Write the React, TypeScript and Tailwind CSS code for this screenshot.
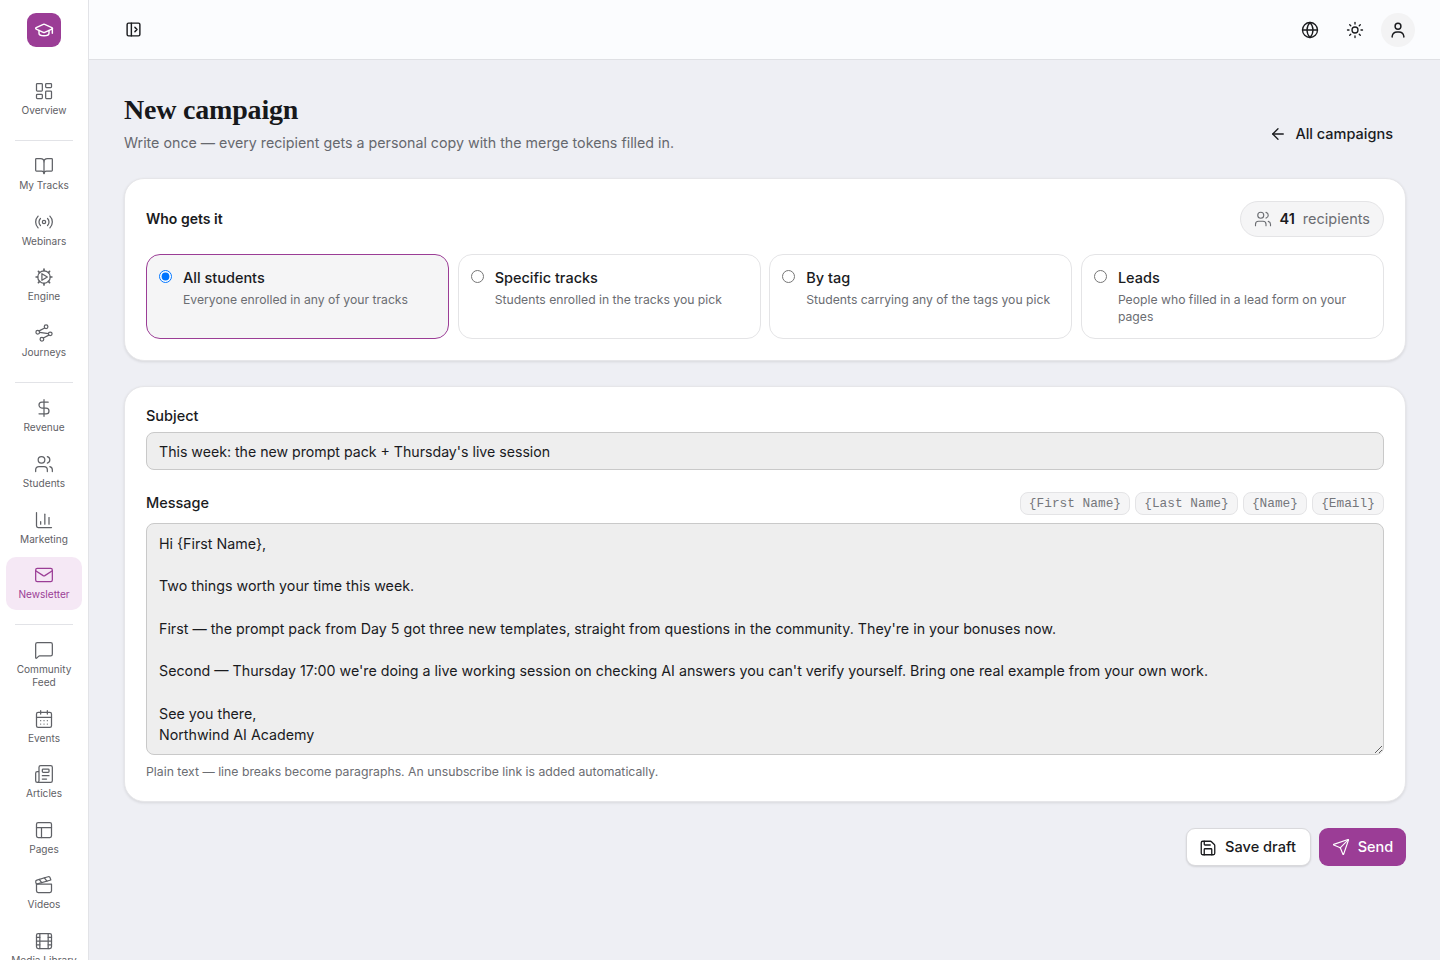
import React from "react";
import {
  GraduationCap, LayoutDashboard, BookOpen, Radio, DollarSign, Users, ChartColumn, Mail,
  MessageSquare, CalendarDays, Newspaper, PanelsTopLeft, Clapperboard, Film, PanelLeftOpen, Globe, Sun,
  ArrowLeft, Save, Send,
} from "lucide-react";

function EngineIcon({ className }: { className?: string }) {
  return (
    <svg viewBox="0 0 24 24" fill="none" stroke="currentColor" strokeWidth={1.5} strokeLinecap="round" strokeLinejoin="round" className={className}>
      <circle cx="12" cy="12" r="7.500" />
      <path strokeWidth={2} d="M12 2.500v2M12 19.500v2M21.500 12h-2M4.500 12h-2M18.700 5.300l-1.400 1.400M6.700 17.300l-1.400 1.400M18.700 18.700l-1.400-1.400M6.700 6.700 5.300 5.300" />
      <path d="M9.500 8v8l6.500-4z" />
    </svg>
  );
}

function JourneyIcon({ className }: { className?: string }) {
  return (
    <svg viewBox="0 0 24 24" fill="none" stroke="currentColor" strokeWidth={1.5} strokeLinecap="round" strokeLinejoin="round" className={className}>
      <circle cx="14.500" cy="4.500" r="2.200" />
      <circle cx="4.500" cy="11" r="2.200" />
      <circle cx="19.500" cy="13" r="2.200" />
      <circle cx="9.500" cy="19.500" r="2.200" />
      <path d="M12.800 6 6.200 9.500M6.700 11.300l10.600 1.400M17.800 14.500l-6.600 3.500" />
    </svg>
  );
}

function UserIcon({ className }: { className?: string }) {
  return (
    <svg viewBox="0 0 24 24" fill="none" stroke="currentColor" strokeWidth={1.75} strokeLinecap="round" strokeLinejoin="round" className={className}>
      <circle cx="12" cy="7.500" r="3.500" />
      <path d="M5 20.500v-1a6 6 0 0 1 6-5h2a6 6 0 0 1 6 5v1" />
    </svg>
  );
}

type Item = { label: React.ReactNode; icon: React.ComponentType<any>; active?: boolean };
const groups: Item[][] = [
  [{ label: "Overview", icon: LayoutDashboard }],
  [
    { label: "My Tracks", icon: BookOpen },
    { label: "Webinars", icon: Radio },
    { label: "Engine", icon: EngineIcon },
    { label: "Journeys", icon: JourneyIcon },
  ],
  [
    { label: "Revenue", icon: DollarSign },
    { label: "Students", icon: Users },
    { label: "Marketing", icon: ChartColumn },
    { label: "Newsletter", icon: Mail, active: true },
  ],
  [
    { label: "Community Feed", icon: MessageSquare },
    { label: "Events", icon: CalendarDays },
    { label: "Articles", icon: Newspaper },
    { label: "Pages", icon: PanelsTopLeft },
    { label: "Videos", icon: Clapperboard },
    { label: "Media Library", icon: Film },
  ],
];

function NavItem({ item }: { item: Item }) {
  const Icon = item.icon;
  return (
    <div className={`flex w-[76px] shrink-0 flex-col items-center gap-[3px] rounded-[10px] px-1 pb-[9px] pt-2 text-center ${item.active ? "bg-[#f5e8f5] text-[#9b3d96]" : "text-[#5f6166]"}`}>
      <Icon className="h-5 w-5 shrink-0" strokeWidth={1.5} />
      <span className="text-[10.100px] leading-[12.800px]">{item.label}</span>
    </div>
  );
}

const options = [
  { title: "All students", desc: "Everyone enrolled in any of your tracks", checked: true },
  { title: "Specific tracks", desc: "Students enrolled in the tracks you pick" },
  { title: "By tag", desc: "Students carrying any of the tags you pick" },
  { title: "Leads", desc: "People who filled in a lead form on your pages" },
];

const tokens = ["{First Name}", "{Last Name}", "{Name}", "{Email}"];

const message = `Hi {First Name},

Two things worth your time this week.

First — the prompt pack from Day 5 got three new templates, straight from questions in the community. They're in your bonuses now.

Second — Thursday 17:00 we're doing a live working session on checking AI answers you can't verify yourself. Bring one real example from your own work.

See you there,
Northwind AI Academy`;

export default function App() {
  return (
    <div className="flex h-screen overflow-hidden bg-[#eeeff4] text-[#1a1b1e] font-['Inter',sans-serif]">
      <aside className="flex h-full w-[89px] shrink-0 flex-col items-center overflow-hidden border-r border-[#e2e3e7] bg-white pt-[13px]">
        <div className="mb-[26px] flex h-[34px] w-[34px] shrink-0 items-center justify-center rounded-[9px] bg-[#9b3d96] text-white">
          <GraduationCap className="h-5 w-5" strokeWidth={1.75} />
        </div>
        {groups.map((g, i) => (
          <React.Fragment key={i}>
            {i > 0 && <div className="mt-[14.600px] mb-[7px] h-px w-[58px] shrink-0 bg-[#e2e3e7]" />}
            <div className="flex shrink-0 flex-col items-center gap-[2.750px]">
              {g.map((it, j) => (
                <NavItem key={j} item={it} />
              ))}
            </div>
          </React.Fragment>
        ))}
      </aside>
      <div className="flex min-w-0 flex-1 flex-col">
        <header className="flex h-[60px] shrink-0 items-center justify-between border-b border-[#dfe0e4] bg-[#fbfcfe] pl-[36px] pr-[25px]">
          <PanelLeftOpen className="h-[17px] w-[17px]" strokeWidth={2} />
          <div className="flex items-center">
            <Globe className="h-[18px] w-[18px]" strokeWidth={1.75} />
            <Sun className="ml-[27px] h-[18px] w-[18px]" strokeWidth={1.75} />
            <div className="ml-[17px] flex h-[34px] w-[34px] items-center justify-center rounded-full bg-[#f3f3f4]">
              <UserIcon className="h-5 w-5" />
            </div>
          </div>
        </header>
        <main className="flex-1 overflow-hidden pl-[35px] pr-[34px]">
          <div className="flex items-end justify-between pt-[33px]">
            <div>
              <h1 className="font-['Liberation_Serif',serif] text-[28px] font-bold leading-[34px] tracking-[-0.2px] text-[#17181b]">New campaign</h1>
              <p className="mt-[5px] text-[14.250px] leading-[22px] text-[#66686e]">Write once — every recipient gets a personal copy with the merge tokens filled in.</p>
            </div>
            <div className="mb-[9px] mr-[13px] flex items-center gap-[8px] text-[14.500px] font-medium leading-[22px]">
              <ArrowLeft className="h-[18px] w-[18px]" strokeWidth={1.75} />
              All campaigns
            </div>
          </div>

          <section className="mt-[24px] rounded-[20px] border border-[#e6e6e9] bg-white px-[21px] pb-[21px] pt-[22px] shadow-[0_1px_3px_rgba(0,0,0,0.1)]">
            <div className="flex h-[36px] items-center justify-between">
              <h2 className="pb-[2px] text-[14px] font-semibold">Who gets it</h2>
              <div className="flex h-[36px] items-center rounded-full border border-[#e4e4e6] bg-[#f5f5f6] pl-[13px] pr-[13px] text-[14.500px] text-[#6b6d72]">
                <Users className="h-[18px] w-[18px]" strokeWidth={1.5} />
                <span className="ml-[8px] font-semibold text-[#1a1b1e]">41</span>
                <span className="ml-[8px]">recipients</span>
              </div>
            </div>
            <div className="mt-[17px] grid grid-cols-4 gap-[8.500px]">
              {options.map((o) => (
                <label key={o.title} className={`flex h-[85px] gap-[11px] rounded-[14px] border pl-[12px] pr-[12px] pt-[12px] ${o.checked ? "border-[#9b3d96] bg-[#f5f5f6]" : "border-[#e4e4e6] bg-white"}`}>
                  <input type="radio" name="aud" defaultChecked={o.checked} className="mt-[3px] h-[13px] w-[13px] shrink-0" />
                  <span className="block">
                    <span className="block text-[14.500px] font-medium leading-[22px]">{o.title}</span>
                    <span className="mt-[2px] block text-[12.200px] leading-[17px] text-[#6b6d72]">{o.desc}</span>
                  </span>
                </label>
              ))}
            </div>
          </section>

          <section className="mt-[25px] rounded-[20px] border border-[#e6e6e9] bg-white px-[21px] pb-[21px] pt-[19px] shadow-[0_1px_3px_rgba(0,0,0,0.1)]">
            <div className="text-[14.500px] font-medium leading-[20px]">Subject</div>
            <input
              readOnly
              value="This week: the new prompt pack + Thursday's live session"
              className="mt-[6px] block h-[38px] w-full rounded-[8px] border border-[#c9c9c9] bg-[#eeeeee] px-[12px] text-[14.150px] text-[#1a1b1e] outline-none"
            />
            <div className="mt-[22px] flex items-center justify-between">
              <div className="pb-[2px] text-[14.500px] font-medium leading-[20px]">Message</div>
              <div className="flex gap-[5px]">
                {tokens.map((t) => (
                  <span key={t} className="flex h-[23px] items-center rounded-[8px] border border-[#e4e4e6] bg-[#f5f5f6] px-[8.100px] font-['Liberation_Mono',monospace] text-[12.800px] text-[#75777c]">{t}</span>
                ))}
              </div>
            </div>
            <textarea
              readOnly
              defaultValue={message}
              className="mt-[8px] block h-[232px] w-full resize-y rounded-[8px] border border-[#c9c9c9] bg-[#eeeeee] px-[12px] py-[9px] text-[14.250px] leading-[21.200px] text-[#1a1b1e] outline-none"
            />
            <p className="mt-[8px] text-[12.250px] leading-[17px] text-[#6b6d72]">Plain text — line breaks become paragraphs. An unsubscribe link is added automatically.</p>
          </section>

          <div className="mt-[26px] flex justify-end gap-[8px]">
            <button className="flex h-[38px] w-[125px] items-center justify-center gap-[8px] rounded-[9px] border border-[#d9d9dc] bg-white pr-[2px] pt-[1px] text-[14.600px] font-medium shadow-[0_1px_2px_rgba(0,0,0,0.12)]">
              <Save className="h-[18px] w-[18px]" strokeWidth={1.75} />
              Save draft
            </button>
            <button className="flex h-[38px] w-[87px] items-center justify-center gap-[8px] rounded-[9px] bg-[#9b3d96] text-[14.500px] font-medium text-white">
              <Send className="h-[18px] w-[18px]" strokeWidth={1.5} />
              Send
            </button>
          </div>
        </main>
      </div>
    </div>
  );
}
